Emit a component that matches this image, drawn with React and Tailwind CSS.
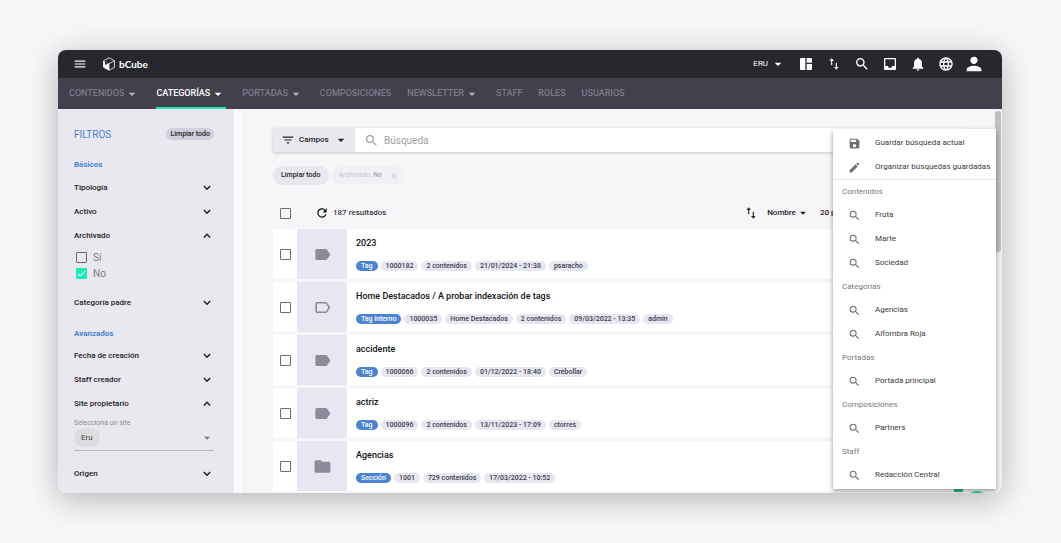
import { MdMenu, MdSpaceDashboard, MdSearch, MdInbox, MdNotifications, MdLanguage, MdPerson, MdArrowDropDown, MdCheck, MdClose, MdFilterList, MdRefresh, MdLabel, MdLabelOutline, MdFolder, MdSave, MdEdit } from 'react-icons/md'

const navItems = [
  { label: 'CONTENIDOS', menu: true },
  { label: 'CATEGORÍAS', menu: true, active: true },
  { label: 'PORTADAS', menu: true },
  { label: 'COMPOSICIONES' },
  { label: 'NEWSLETTER', menu: true },
  { label: 'STAFF' },
  { label: 'ROLES' },
  { label: 'USUARIOS' },
]

const rows = [
  { title: '2023', icon: MdLabel, type: 'Tag', chips: ['1000182', '2 contenidos', '21/01/2024 - 21:38', 'psaracho'] },
  { title: 'Home Destacados / A probar indexación de tags', icon: MdLabelOutline, type: 'Tag interno', chips: ['1000035', 'Home Destacados', '2 contenidos', '09/03/2022 - 13:35', 'admin'] },
  { title: 'accidente', icon: MdLabel, type: 'Tag', chips: ['1000066', '2 contenidos', '01/12/2022 - 18:40', 'Crebollar'] },
  { title: 'actriz', icon: MdLabel, type: 'Tag', chips: ['1000096', '2 contenidos', '13/11/2023 - 17:09', 'ctorres'] },
  { title: 'Agencias', icon: MdFolder, type: 'Sección', chips: ['1001', '729 contenidos', '17/03/2022 - 10:52'] },
]

const savedSearches = [
  { group: 'Contenidos', items: ['Fruta', 'Marte', 'Sociedad'] },
  { group: 'Categorías', items: ['Agencias', 'Alfombra Roja'] },
  { group: 'Portadas', items: ['Portada principal'] },
  { group: 'Composiciones', items: ['Partners'] },
  { group: 'Staff', items: ['Redacción Central'] },
]

const SortIcon = () => (
  <svg width="14" height="14" viewBox="0 0 24 24" fill="none" stroke="currentColor" strokeWidth="2">
    <path d="M8 14V5M16 10v9" />
    <path d="M8 2l4 5H4zM16 22l4-5h-8z" fill="currentColor" stroke="none" />
  </svg>
)

const Chevron = ({ open }) => (
  <svg width="14" height="14" viewBox="0 0 14 14" fill="none" stroke="currentColor" strokeWidth="1.5">
    <path d={open ? 'M3.800 8.500L7 5.300l3.200 3.200' : 'M3.800 5l3.200 3.200L10.200 5'} />
  </svg>
)

const Logo = () => (
  <svg width="14" height="14" viewBox="0 0 28 28" fill="none" stroke="#fff" strokeWidth="1.6" strokeLinejoin="round">
    <path d="M14 1.500l11 6v13l-11 6-11-6v-13z" />
    <path d="M14 26V13.500L25 7.500" />
    <path d="M3 7.500L14 13.500v13l-11-6z" fill="#fff" stroke="none" />
    <path d="M5 9l7 4-5 3z" fill="#27282d" stroke="none" />
  </svg>
)

const Checkbox = ({ label, checked }) => (
  <span className="relative flex size-[11px] shrink-0">
    <input id={'check-' + label} type="checkbox" aria-label={label} defaultChecked={checked} className="peer size-[11px] appearance-none rounded-[1px] border border-[#6b6b70] checked:border-[#1de9b6] checked:bg-[#1de9b6]" />
    <MdCheck className="pointer-events-none absolute inset-0 hidden size-[11px] text-white peer-checked:block" />
  </span>
)

const FilterHeading = ({ label, open }) => (
  <button className="flex h-6 w-full items-center justify-between text-left text-[8px] font-medium text-[#222226]">
    {label}
    <Chevron open={open} />
  </button>
)

const Sidebar = () => (
  <aside className="w-[176px] shrink-0 bg-[#e9e8ef] pt-[18px] pr-5 pl-4">
    <div className="flex h-[14px] items-center justify-between">
      <h2 className="text-[10px] text-[#4a82d4]">FILTROS</h2>
      <button className="h-3 rounded-full bg-[#d0cfdd] px-1 text-[7px] font-medium text-[#222226]">Limpiar todo</button>
    </div>
    <h3 className="mt-[17px] flex h-[14px] items-center text-[8px] font-bold text-[#4a82d4]">Básicos</h3>
    <div className="mt-1">
      <FilterHeading label="Tipología" />
      <FilterHeading label="Activo" />
      <FilterHeading label="Archivado" open />
      <div className="space-y-1 pt-[3px] pl-[2px] text-[10px] text-[#7a7a80]">
        <div className="flex h-3 items-center gap-[6px]"><Checkbox label="Sí" /><label htmlFor="check-Sí">Sí</label></div>
        <div className="flex h-3 items-center gap-[6px]"><Checkbox label="No" checked /><label htmlFor="check-No">No</label></div>
      </div>
      <div className="mt-3"><FilterHeading label="Categoría padre" /></div>
    </div>
    <h3 className="mt-3 flex h-[14px] items-center text-[8px] font-bold text-[#4a82d4]">Avanzados</h3>
    <div className="mt-[3px]">
      <FilterHeading label="Fecha de creación" />
      <FilterHeading label="Staff creador" />
      <FilterHeading label="Site propietario" open />
      <div className="border-b border-[#b9b9c0] pt-[2px] pb-[3px]">
        <div className="text-[7px] leading-[10px] text-[#8a8a90]">Selecciona un site</div>
        <div className="flex h-[19px] items-center justify-between">
          <button className="h-[19px] rounded-full bg-[#dddddf] px-[7px] text-[8px] text-[#3c3c40]">Eru</button>
          <MdArrowDropDown className="size-[14px] text-[#77777c]" />
        </div>
      </div>
      <div className="mt-[11px]"><FilterHeading label="Origen" /></div>
    </div>
  </aside>
)

const Row = ({ row }) => (
  <li className="flex h-[50px] bg-white">
    <div className="flex w-6 items-center justify-center"><Checkbox label={row.title} /></div>
    <div className="flex w-[50px] items-center justify-center bg-[#e7e7f1] text-[#8b8b9c]"><row.icon className="size-[19px]" /></div>
    <div className="flex flex-col justify-between py-2 pr-2 pl-[9px]">
      <a href="#" className="block text-[9px] leading-[13px] font-medium text-[#111]">{row.title}</a>
      <div className="flex gap-[3px] text-[7px] leading-[10px] font-medium whitespace-nowrap text-[#3d3c4c]">
        <span className="rounded-full bg-[#4a82d4] px-[5px] text-white">{row.type}</span>
        {row.chips.map((chip) => <span key={chip} className="rounded-full bg-[#e7e7f1] px-[5px]">{chip}</span>)}
      </div>
    </div>
  </li>
)

const SearchMenu = () => (
  <div className="absolute top-5 right-[6px] w-[163px] bg-white pt-[2px] pb-[2px] text-[8px] text-[#3a3a3d] shadow-[0_2px_5px_rgba(0,0,0,0.4)]">
    <div className="border-b border-[#e4e4e6]">
      <button className="flex h-6 w-full items-center gap-[14px] pl-[15px]"><MdSave className="size-[13px] text-[#6f6f72]" />Guardar búsqueda actual</button>
      <button className="flex h-6 w-full items-center gap-[14px] pl-[15px] whitespace-nowrap"><MdEdit className="size-[13px] text-[#6f6f72]" />Organizar búsquedas guardadas</button>
    </div>
    {savedSearches.map(({ group, items }) => (
      <div key={group}>
        <h4 className="flex h-[23px] items-center pl-[9px] text-[#77777a]">{group}</h4>
        {items.map((item) => (
          <button key={item} className="flex h-6 w-full items-center gap-[14px] pl-[15px]"><MdSearch className="size-[13px] text-[#6f6f72]" />{item}</button>
        ))}
      </div>
    ))}
  </div>
)

const App = () => {
  return (
    <div className="h-screen bg-[#f7f7f9] py-[50px] pr-[59px] pl-[58px] font-['Roboto',sans-serif]">
      <div className="flex h-full flex-col overflow-hidden rounded-lg bg-[#f6f6f9] shadow-[0_6px_32px_rgba(0,0,0,0.28)]">
        <header className="flex h-7 shrink-0 items-center justify-between bg-[#27282d] pr-5 pl-[15px] text-white">
          <div className="flex items-center">
            <button aria-label="Menú"><MdMenu className="size-[14px]" /></button>
            <a href="#" className="ml-[15px] flex items-center gap-[3px] font-['Lato',sans-serif] text-[10px] font-bold"><Logo />bCube</a>
          </div>
          <div className="flex items-center gap-3">
            <button className="flex items-center gap-[2px] text-[8px]">ERU <MdArrowDropDown className="size-4" /></button>
            <button aria-label="Panel"><MdSpaceDashboard className="size-4" /></button>
            <button aria-label="Ordenar" className="flex size-4 items-center justify-center"><SortIcon /></button>
            <button aria-label="Buscar"><MdSearch className="size-4" /></button>
            <button aria-label="Bandeja"><MdInbox className="size-4" /></button>
            <button aria-label="Avisos"><MdNotifications className="size-4" /></button>
            <button aria-label="Idioma"><MdLanguage className="size-4" /></button>
            <button aria-label="Perfil" className="-mx-[3px]"><MdPerson className="size-[22px]" /></button>
          </div>
        </header>
        <nav className="flex h-[31px] shrink-0 gap-4 bg-[#42404d] pl-[11px] text-[9px] font-medium text-[#7d7b88]">
          {navItems.map(({ label, menu, active }) => (
            <a key={label} href="#" className={active ? 'flex items-center border-b-2 border-[#1de9b6] pt-[2px] text-white' : 'flex items-center'}>
              {label}
              {menu && <MdArrowDropDown className={active ? 'size-4' : 'size-4 text-[#b5b4bd]'} />}
            </a>
          ))}
        </nav>
        <div className="relative flex min-h-0 flex-1">
          <Sidebar />
          <div className="w-[10px] shrink-0 border-r border-[#f0f0f2] bg-[#fafafa]" />
          <main className="min-w-0 flex-1 overflow-hidden pt-[19px] pr-9 pl-[29px]">
            <div className="flex h-6 bg-white shadow-[0_1px_3px_rgba(0,0,0,0.2)]">
              <button className="flex w-[82px] items-center bg-[#e9e8ef] pl-2 text-[8px] font-medium text-[#222226]">
                <MdFilterList className="mr-1 size-[14px]" />Campos<MdArrowDropDown className="ml-1 size-4" />
              </button>
              <div className="flex flex-1 items-center gap-[5px] pl-[9px]">
                <MdSearch className="size-[15px] text-[#a3a3b3]" />
                <input aria-label="Búsqueda" placeholder="Búsqueda" className="flex-1 text-[10px] outline-none placeholder:text-[#a0a0a5]" />
              </div>
            </div>
            <div className="mt-[14px] flex gap-[3px] text-[7px] font-medium">
              <button className="h-[19px] rounded-full bg-[#e7e7ef] px-2 text-[#222226]">Limpiar todo</button>
              <button className="flex h-[19px] items-center rounded-full bg-[#f1f1f5] pr-[5px] pl-[7px] text-[#a8a8ae]"><span className="font-normal text-[#c4c4ca]">Archivado:</span>&nbsp;No<MdClose className="ml-[7px] size-[10px] text-[#c4c4ca]" /></button>
            </div>
            <div className="mt-[13px] flex h-[30px] items-center text-[8px] font-medium text-[#3a3a3f]">
              <div className="flex w-6 justify-center"><Checkbox label="Seleccionar todo" /></div>
              <button aria-label="Recargar" className="ml-[18px] text-[#111]"><MdRefresh className="size-[14px]" /></button>
              <span className="ml-1">187 resultados</span>
              <div className="ml-auto flex items-center text-[#222226]">
                <button aria-label="Invertir orden"><SortIcon /></button>
                <button className="ml-[9px] flex items-center">Nombre<MdArrowDropDown className="size-[14px]" /></button>
                <button className="ml-[10px] flex items-center whitespace-nowrap">20 por página<MdArrowDropDown className="size-[14px]" /></button>
                <button aria-label="Vista" className="ml-[69px]"><MdSpaceDashboard className="size-[14px]" /></button>
              </div>
            </div>
            <ul className="mt-[1px] space-y-[3px]">
              {rows.map((row) => <Row key={row.title} row={row} />)}
            </ul>
          </main>
          <div className="absolute inset-y-0 right-0 w-2 bg-[#f1f1f3] px-[1px] pt-[2px]">
            <div className="h-[141px] rounded-full bg-[#c0c0c2]" />
          </div>
          <button aria-label="Añadir" className="absolute right-[13px] bottom-[-22px] size-6 rounded-full bg-[#1cd3a2]" />
          <span className="absolute right-[39px] bottom-[1px] h-2 w-[9px] bg-[#2fb389]" />
          <SearchMenu />
        </div>
      </div>
    </div>
  )
}

export default App
